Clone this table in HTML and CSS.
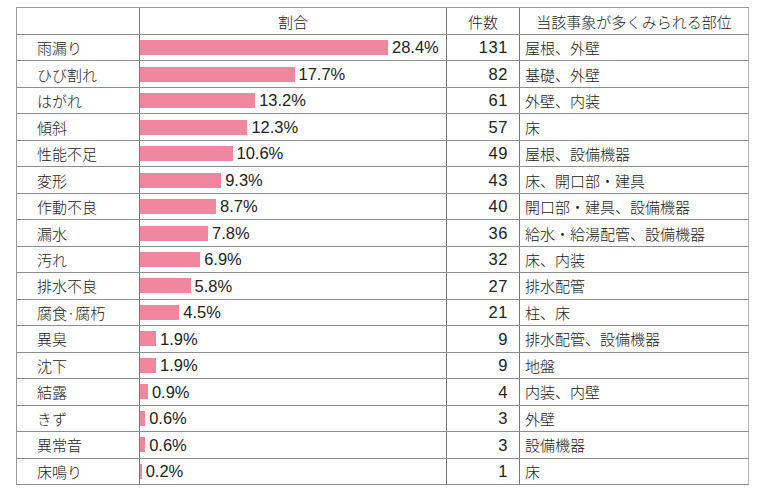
FILE: index.html
```html
<!DOCTYPE html>
<html lang="ja">
<head>
<meta charset="utf-8">
<title>不具合事象</title>
<link rel="stylesheet" href="styles.css">
</head>
<body>
<div class="table">
  <div class="row head">
    <div class="cell name"></div>
    <div class="cell ratio center">割合</div>
    <div class="cell count center">件数</div>
    <div class="cell parts center">当該事象が多くみられる部位</div>
  </div>
  <div class="row"><div class="cell name">雨漏り</div><div class="cell ratio"><span class="bar" style="width:248px"></span><span class="num">28.4%</span></div><div class="cell count num">131</div><div class="cell parts">屋根、外壁</div></div>
  <div class="row"><div class="cell name">ひび割れ</div><div class="cell ratio"><span class="bar" style="width:154.5px"></span><span class="num">17.7%</span></div><div class="cell count num">82</div><div class="cell parts">基礎、外壁</div></div>
  <div class="row"><div class="cell name">はがれ</div><div class="cell ratio"><span class="bar" style="width:115.2px"></span><span class="num">13.2%</span></div><div class="cell count num">61</div><div class="cell parts">外壁、内装</div></div>
  <div class="row"><div class="cell name">傾斜</div><div class="cell ratio"><span class="bar" style="width:107.4px"></span><span class="num">12.3%</span></div><div class="cell count num">57</div><div class="cell parts">床</div></div>
  <div class="row"><div class="cell name">性能不足</div><div class="cell ratio"><span class="bar" style="width:92.5px"></span><span class="num">10.6%</span></div><div class="cell count num">49</div><div class="cell parts">屋根、設備機器</div></div>
  <div class="row"><div class="cell name">変形</div><div class="cell ratio"><span class="bar" style="width:81.2px"></span><span class="num">9.3%</span></div><div class="cell count num">43</div><div class="cell parts">床、開口部・建具</div></div>
  <div class="row"><div class="cell name">作動不良</div><div class="cell ratio"><span class="bar" style="width:76px"></span><span class="num">8.7%</span></div><div class="cell count num">40</div><div class="cell parts">開口部・建具、設備機器</div></div>
  <div class="row"><div class="cell name">漏水</div><div class="cell ratio"><span class="bar" style="width:68.1px"></span><span class="num">7.8%</span></div><div class="cell count num">36</div><div class="cell parts">給水・給湯配管、設備機器</div></div>
  <div class="row"><div class="cell name">汚れ</div><div class="cell ratio"><span class="bar" style="width:60.2px"></span><span class="num">6.9%</span></div><div class="cell count num">32</div><div class="cell parts">床、内装</div></div>
  <div class="row"><div class="cell name">排水不良</div><div class="cell ratio"><span class="bar" style="width:50.6px"></span><span class="num">5.8%</span></div><div class="cell count num">27</div><div class="cell parts">排水配管</div></div>
  <div class="row"><div class="cell name">腐食·腐朽</div><div class="cell ratio"><span class="bar" style="width:39.3px"></span><span class="num">4.5%</span></div><div class="cell count num">21</div><div class="cell parts">柱、床</div></div>
  <div class="row"><div class="cell name">異臭</div><div class="cell ratio"><span class="bar" style="width:16px"></span><span class="num">1.9%</span></div><div class="cell count num">9</div><div class="cell parts">排水配管、設備機器</div></div>
  <div class="row"><div class="cell name">沈下</div><div class="cell ratio"><span class="bar" style="width:16px"></span><span class="num">1.9%</span></div><div class="cell count num">9</div><div class="cell parts">地盤</div></div>
  <div class="row"><div class="cell name">結露</div><div class="cell ratio"><span class="bar" style="width:7.9px"></span><span class="num">0.9%</span></div><div class="cell count num">4</div><div class="cell parts">内装、内壁</div></div>
  <div class="row"><div class="cell name">きず</div><div class="cell ratio"><span class="bar" style="width:5.2px"></span><span class="num">0.6%</span></div><div class="cell count num">3</div><div class="cell parts">外壁</div></div>
  <div class="row"><div class="cell name">異常音</div><div class="cell ratio"><span class="bar" style="width:5.2px"></span><span class="num">0.6%</span></div><div class="cell count num">3</div><div class="cell parts">設備機器</div></div>
  <div class="row"><div class="cell name">床鳴り</div><div class="cell ratio"><span class="bar" style="width:1.7px"></span><span class="num">0.2%</span></div><div class="cell count num">1</div><div class="cell parts">床</div></div>
</div>
</body>
</html>
```

FILE: styles.css
```css
html, body {
  margin: 0;
  padding: 0;
  background: #ffffff;
}

body {
  font-family: "Noto Sans CJK JP", "Noto Sans", sans-serif;
  font-size: 15px;
  font-weight: 300;
  color: #222222;
}

.table {
  box-sizing: border-box;
  margin: 7px 0 0 16px;
  width: 733px;
  height: 478px;
  border-top: 1px solid #999999;
  border-left: 1px solid #999999;
  display: flex;
  flex-direction: column;
}

.row {
  box-sizing: border-box;
  flex: 1 1 0;
  min-height: 0;
  display: grid;
  grid-template-columns: 123px 307px 73px 229px;
  border-bottom: 1px solid #8e8e8e;
}

.row.head {
  flex: 0 0 27px;
}

.cell {
  box-sizing: border-box;
  border-right: 1px solid #777777;
  display: flex;
  align-items: center;
  white-space: nowrap;
  line-height: 1;
  overflow: hidden;
}

.cell.parts {
  border-right: 1px solid #b5b5b5;
  padding-left: 5px;
}

.cell.name {
  padding-left: 20px;
}

.cell.count {
  justify-content: flex-end;
  padding-right: 11px;
}

.cell.center {
  justify-content: center;
  padding: 0;
}

.num {
  font-family: "Liberation Sans", Arial, sans-serif;
  font-size: 16.5px;
  font-weight: 400;
}

.cell.count.num {
  letter-spacing: 0.6px;
}

.bar {
  display: block;
  flex: none;
  height: 15px;
  background: #f0879f;
  margin-right: 4px;
}
```
